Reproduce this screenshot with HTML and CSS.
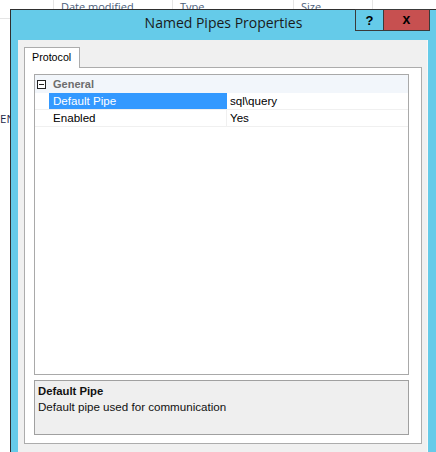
FILE: index.html
```html
<!DOCTYPE html>
<html>
<head>
<meta charset="utf-8">
<link rel="stylesheet" href="styles.css">
</head>
<body>
<div class="explorer">
  <div class="col-header">
    <div class="hcell c0"></div>
    <div class="hcell c1">Date modified</div>
    <div class="hcell c2">Type</div>
    <div class="hcell c3">Size</div>
  </div>
  <div class="list-row">EN</div>
</div>

<div class="dialog">
  <div class="titlebar">
    <div class="title">Named Pipes Properties</div>
    <div class="caption-buttons">
      <div class="cbtn help">?</div>
      <div class="cbtn close">x</div>
    </div>
  </div>
  <div class="client">
    <div class="tabs">
      <div class="tab">Protocol</div>
    </div>
    <div class="tab-panel">
      <div class="grid">
        <div class="cat-row">
          <div class="gutter"><span class="minus"></span></div>
          <div class="cat-label">General</div>
        </div>
        <div class="prop-row selected">
          <div class="gutter"></div>
          <div class="pname">Default Pipe</div>
          <div class="pvalue">sql\query</div>
        </div>
        <div class="prop-row">
          <div class="gutter"></div>
          <div class="pname">Enabled</div>
          <div class="pvalue">Yes</div>
        </div>
      </div>
      <div class="desc">
        <div class="desc-title">Default Pipe</div>
        <div class="desc-text">Default pipe used for communication</div>
      </div>
    </div>
  </div>
</div>
</body>
</html>
```

FILE: styles.css
```css
html, body {
  margin: 0;
  padding: 0;
}
body {
  width: 436px;
  height: 452px;
  overflow: hidden;
  background: #ffffff;
  position: relative;
  font-family: "Liberation Sans", Arial, sans-serif;
}

/* background explorer window */
.explorer {
  font-family: "Open Sans", sans-serif;
}
.col-header {
  display: flex;
  height: 18px;
  border-bottom: 1px solid #e5e5e5;
  font-size: 11px;
  color: #4c607a;
  line-height: 14px;
}
.hcell {
  border-right: 1px solid #e5e5e5;
  padding-left: 7px;
  box-sizing: border-box;
}
.c0 { width: 54px; }
.c1 { width: 119px; }
.c2 { width: 121px; }
.c3 { width: 79px; }
.list-row {
  margin-top: 92px;
  margin-left: 0;
  font-size: 11.5px;
  line-height: 16px;
  color: #1e2a4a;
}

/* dialog window */
.dialog {
  position: absolute;
  left: 10px;
  top: 9px;
  width: 426px;
  height: 460px;
  box-sizing: border-box;
  border-left: 1px solid #2f2f2f;
  border-top: 1px solid #2f2f2f;
  background: #65cbe9;
  padding: 0 8px 0 7px;
  display: flex;
  flex-direction: column;
}
.titlebar {
  position: relative;
  height: 30px;
  margin: 0 -8px 0 -7px;
}
.title {
  text-align: center;
  font-family: "Open Sans", sans-serif;
  font-size: 14px;
  line-height: 26px;
  color: #1a1a1a;
}
.caption-buttons {
  position: absolute;
  top: -1px;
  right: 6px;
  display: flex;
}
.cbtn {
  height: 22px;
  box-sizing: border-box;
  border: 1px solid #3a3a3a;
  display: flex;
  align-items: center;
  justify-content: center;
  font-family: "Liberation Sans", sans-serif;
  font-weight: bold;
  color: #000;
}
.help {
  width: 28px;
  border-right: none;
  font-size: 13px;
  padding-top: 1px;
}
.close {
  width: 47px;
  background: #c75050;
  font-size: 14px;
  padding-bottom: 2px;
}

.client {
  flex: 1;
  background: #f0f0f0;
  padding: 7px 5px 0 6px;
  border-right: 1px solid #f8f8f8;
}
.tabs {
  display: flex;
}
.tab {
  position: relative;
  z-index: 1;
  width: 56px;
  height: 21px;
  box-sizing: border-box;
  border: 1px solid #acacac;
  border-bottom: none;
  background: #ffffff;
  margin-bottom: -1px;
  padding-left: 7px;
  font-size: 10.7px;
  line-height: 19px;
  color: #000;
}
.tab-panel {
  height: 377px;
  box-sizing: border-box;
  border: 1px solid #acacac;
  background: #ffffff;
  padding: 6px 12px 0 9px;
}
.grid {
  height: 301px;
  box-sizing: border-box;
  border: 1px solid #a9a9a9;
  background: #ffffff;
  font-size: 11.6px;
  color: #000;
}
.gutter {
  width: 14px;
  flex: none;
  display: flex;
  align-items: center;
}
.cat-row {
  display: flex;
  height: 18px;
  background: #f2f6fb;
  line-height: 18px;
}
.minus {
  position: relative;
  width: 9px;
  height: 9px;
  box-sizing: border-box;
  border: 1px solid #222;
  margin-left: 2px;
  background: #fff;
}
.minus::after {
  content: "";
  position: absolute;
  left: 1px;
  right: 1px;
  top: 3px;
  height: 1px;
  background: #222;
}
.cat-label {
  padding-left: 4px;
  font-weight: bold;
  font-size: 11px;
  color: #6d6d6d;
}
.prop-row {
  display: flex;
  height: 17px;
  box-sizing: border-box;
  border-bottom: 1px solid #f0f0f0;
  line-height: 16px;
}
.pname {
  width: 178px;
  flex: none;
  padding-left: 4px;
  box-sizing: border-box;
  border-right: 1px solid #f0f0f0;
}
.pvalue {
  padding-left: 3px;
}
.prop-row.selected .pname {
  background: #3399ff;
  color: #ffffff;
  border-right-color: #3399ff;
}

.desc {
  margin-top: 5px;
  height: 55px;
  box-sizing: border-box;
  border: 1px solid #a0a0a0;
  background: #efefef;
  padding: 2px 3px;
  font-size: 11.6px;
  line-height: 16px;
  color: #111;
}
.desc-title {
  font-weight: bold;
  font-size: 11.3px;
}
```
